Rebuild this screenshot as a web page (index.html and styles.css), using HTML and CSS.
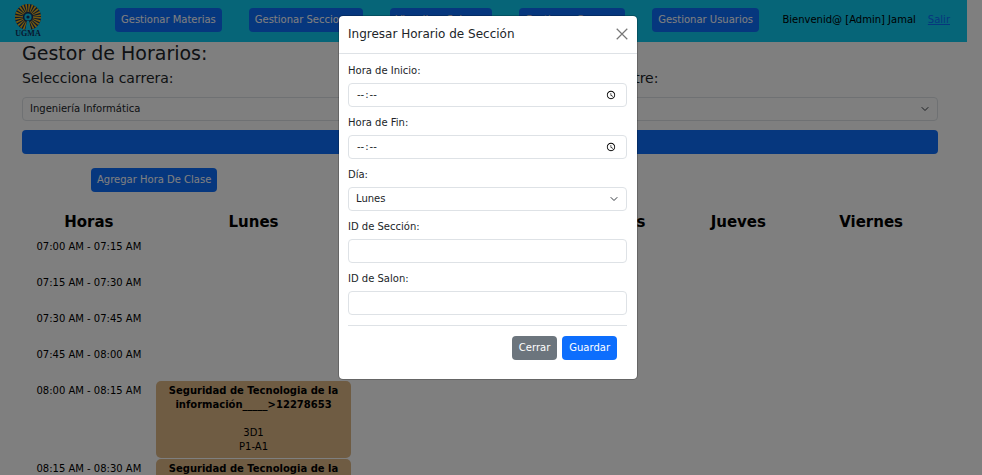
FILE: index.html
```html
<!DOCTYPE html>
<html lang="es">
<head>
<meta charset="utf-8">
<title>Gestor de Horarios</title>
<link rel="stylesheet" href="styles.css">
</head>
<body>
<header class="navbar">
  <svg class="logo" viewBox="0 0 30 34" role="img" aria-label="UGMA">
    <g fill="none">
      <circle cx="15" cy="14" r="8.5" stroke="#12305f" stroke-width="9"/>
      <circle cx="15" cy="14" r="9" stroke="#f0b61c" stroke-width="8" stroke-dasharray="1.3 1.056"/>
      <circle cx="15" cy="14" r="4.6" fill="#12305f"/>
      <circle cx="15" cy="14" r="3.6" fill="#0dcaf0"/>
      <circle cx="15" cy="14" r="1.6" fill="#12305f"/>
    </g>
    <path d="M12 28 L14 18 H16 L18 28Z" fill="#0dcaf0"/>
    <text class="logo-text" x="15" y="33" text-anchor="middle">UGMA</text>
  </svg>
  <nav class="nav-links">
    <button class="btn primary" type="button">Gestionar Materias</button>
    <button class="btn primary" type="button">Gestionar Secciones</button>
    <button class="btn primary" type="button">Visualizar Salones</button>
    <button class="btn primary" type="button">Gestionar Carreras</button>
    <button class="btn primary" type="button">Gestionar Usuarios</button>
  </nav>
  <span class="welcome">Bienvenid@ [Admin] Jamal</span>
  <a class="logout" href="#">Salir</a>
</header>

<main class="page">
  <h1 class="title">Gestor de Horarios:</h1>
  <div class="filters">
    <div class="filter">
      <label class="subtitle" for="carrera">Selecciona la carrera:</label>
      <select class="control select" id="carrera"><option>Ingeniería Informática</option></select>
    </div>
    <div class="filter">
      <label class="subtitle" for="semestre">Selecciona el semestre:</label>
      <select class="control select" id="semestre"><option></option></select>
    </div>
  </div>
  <button class="btn primary search" type="button" aria-label="Buscar"></button>
  <button class="btn primary add" type="button">Agregar Hora De Clase</button>

  <table class="schedule">
    <colgroup><col class="col-day"><col class="col-lunes"><col class="col-martes"><col><col class="col-day"><col class="col-day"></colgroup>
    <thead>
      <tr><th>Horas</th><th>Lunes</th><th>Martes</th><th>Miércoles</th><th>Jueves</th><th>Viernes</th></tr>
    </thead>
    <tbody>
      <tr><td>07:00 AM - 07:15 AM</td><td></td><td></td><td></td><td></td><td></td></tr>
      <tr><td>07:15 AM - 07:30 AM</td><td></td><td></td><td></td><td></td><td></td></tr>
      <tr><td>07:30 AM - 07:45 AM</td><td></td><td></td><td></td><td></td><td></td></tr>
      <tr><td>07:45 AM - 08:00 AM</td><td></td><td></td><td></td><td></td><td></td></tr>
      <tr><td>08:00 AM - 08:15 AM</td><td class="class-cell"><b>Seguridad de Tecnologia de la información_____&gt;12278653</b><br><br>3D1<br>P1-A1</td><td></td><td></td><td></td><td></td></tr>
      <tr><td>08:15 AM - 08:30 AM</td><td class="class-cell"><b>Seguridad de Tecnologia de la</b></td><td></td><td></td><td></td><td></td></tr>
    </tbody>
  </table>
</main>

<div class="backdrop">
  <section class="modal" role="dialog" aria-modal="true" aria-labelledby="modal-title">
    <header class="modal-header">
      <h2 class="modal-title" id="modal-title">Ingresar Horario de Sección</h2>
      <button class="close" type="button" aria-label="Cerrar ventana">
        <svg viewBox="0 0 10 10"><path d="M.6.6 9.4 9.4M9.4.6.6 9.4"/></svg>
      </button>
    </header>
    <form class="modal-body">
      <label class="field-label" for="inicio">Hora de Inicio:</label>
      <input class="control" id="inicio" type="time">
      <label class="field-label" for="fin">Hora de Fin:</label>
      <input class="control" id="fin" type="time">
      <label class="field-label" for="dia">Día:</label>
      <select class="control select" id="dia"><option>Lunes</option></select>
      <label class="field-label" for="seccion">ID de Sección:</label>
      <input class="control" id="seccion" type="text">
      <label class="field-label" for="salon">ID de Salon:</label>
      <input class="control" id="salon" type="text">
      <footer class="modal-footer">
        <button class="btn secondary" type="button">Cerrar</button>
        <button class="btn primary" type="button">Guardar</button>
      </footer>
    </form>
  </section>
</div>
</body>
</html>
```
FILE: styles.css
```css
* { box-sizing: border-box; }

html { height: 100%; overflow: hidden; }

body {
  margin: 0;
  height: 100%;
  overflow: hidden;
  background: #fff;
  color: #212529;
  font: 10px/14px "DejaVu Sans", sans-serif;
}

h1, h2 { margin: 0; font-weight: 400; }

button, input, select { font: inherit; color: inherit; }

.navbar {
  display: flex;
  align-items: center;
  height: 42px;
  margin-right: 15px;
  padding: 0 17px 2px 13px;
  background: #0dcaf0;
}

.logo { width: 30px; height: 34px; flex: none; }
.logo-text { font: bold 8px "Liberation Serif", serif; fill: #12305f; }

.nav-links {
  display: flex;
  gap: 27px;
  margin: 0 auto 0 72px;
}

.welcome { color: #000; white-space: nowrap; }
.logout { margin-left: 12px; color: #0d6efd; }

.btn {
  height: 24px;
  padding: 0 6px;
  border: 0;
  border-radius: 4px;
  white-space: nowrap;
  color: #fff;
}
.primary { background: #0d6efd; }
.secondary { background: #6c757d; }

.page { padding: 0 44px 0 22px; }

.title { margin-bottom: 2px; font-size: 19px; line-height: 22px; }

.filters { display: flex; gap: 24px; }
.filter { flex: 1; }

.subtitle {
  display: block;
  margin-bottom: 7px;
  font-size: 14px;
  line-height: 24px;
}

.control {
  display: block;
  width: 100%;
  height: 24px;
  padding: 0 7px;
  border: 1px solid #dee2e6;
  border-radius: 4px;
  background-color: #fff;
}

.control::-webkit-datetime-edit-ampm-field { display: none; }

.select {
  appearance: none;
  background-image: url("data:image/svg+xml,%3Csvg xmlns='http://www.w3.org/2000/svg' viewBox='0 0 16 16'%3E%3Cpath fill='none' stroke='%23343a40' stroke-linecap='round' stroke-linejoin='round' stroke-width='2' d='m2 5 6 6 6-6'/%3E%3C/svg%3E");
  background-repeat: no-repeat;
  background-position: right 8px center;
  background-size: 8px 8px;
}

.search { display: block; width: 100%; margin: 9px 0 14px; }
.add { display: block; margin: 0 0 16px 69px; }

.schedule {
  width: 100%;
  table-layout: fixed;
  border-spacing: 1px;
  color: #000;
  text-align: center;
}
.schedule th { padding: 0; font-size: 15px; line-height: 27px; }
.schedule td { height: 35px; padding: 3px 8px; vertical-align: top; }
.col-day { width: 14.5%; }
.col-lunes { width: 21.5%; }
.col-martes { width: 20.4%; }

.schedule .class-cell {
  height: 77px;
  border-radius: 5px;
  background: #deb887;
}

.backdrop {
  position: absolute;
  inset: 0;
  padding: 15px 6px 0 0;
  background: rgba(0, 0, 0, .5);
}

.modal {
  width: 300px;
  margin: 0 auto;
  border: 1px solid rgba(0, 0, 0, .2);
  border-radius: 5px;
  background: #fff;
  background-clip: padding-box;
}

.modal-header {
  display: flex;
  align-items: center;
  justify-content: space-between;
  height: 38px;
  padding: 0 9px 2px;
  border-bottom: 1px solid #dee2e6;
}
.modal-title { font-size: 12px; line-height: 18px; }

.close {
  width: 12px;
  height: 12px;
  padding: 0;
  border: 0;
  background: none;
}
.close svg { display: block; width: 12px; height: 12px; }
.close path { stroke: #777; stroke-width: 1; fill: none; }

.modal-body { padding: 10px 10px 19px 9px; }

.field-label { display: block; margin: 9px 0 5px; }
.field-label:first-child { margin-top: 0; }

.modal-footer {
  display: flex;
  justify-content: flex-end;
  gap: 5px;
  margin-top: 10px;
  padding: 10px 10px 0;
  border-top: 1px solid #dee2e6;
}
.modal-footer .btn { padding: 0 7px; }
```
